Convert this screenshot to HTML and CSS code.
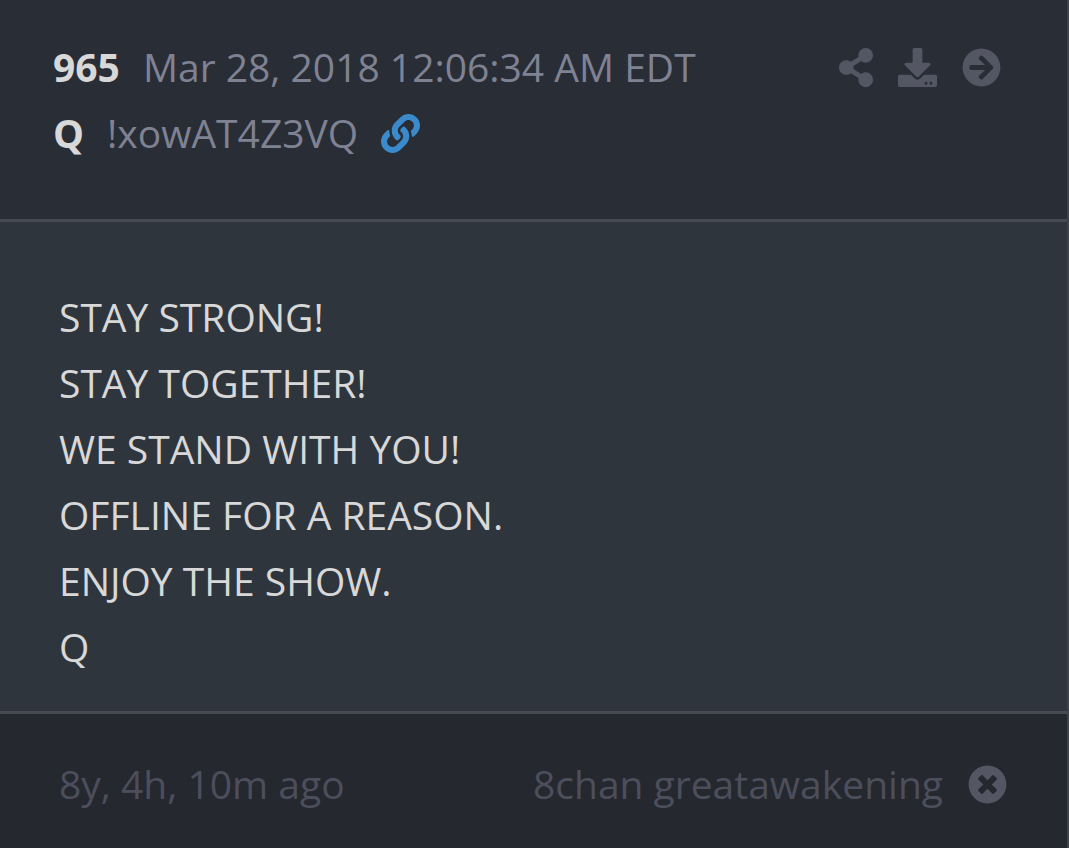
FILE: index.html
```html
<!DOCTYPE html>
<html lang="en">
<head>
    <meta charset="UTF-8">
    <meta name="viewport" content="width=device-width, initial-scale=1.0">
    <title>965</title>
    <link rel="stylesheet" href="styles.css">
</head>
<body>
    <article class="post">
        <header class="post-header">
            <div class="post-meta">
                <div class="meta-row">
                    <strong class="post-number">965</strong>
                    <time datetime="2018-03-28T00:06:34-04:00">Mar 28, 2018 12:06:34 AM EDT</time>
                </div>
                <div class="meta-row">
                    <strong class="post-author">Q</strong>
                    <span class="tripcode">!xowAT4Z3VQ</span>
                    <a class="source-link" href="#" aria-label="Source">
                        <svg class="icon" viewBox="0 0 512 512"><path d="M326.612 185.391c59.747 59.809 58.927 155.698.36 214.59-.11.12-.24.25-.36.37l-67.2 67.2c-59.27 59.27-155.699 59.262-214.96 0-59.27-59.26-59.27-155.7 0-214.96l37.106-37.106c9.84-9.84 26.786-3.3 27.294 10.606.648 17.722 3.826 35.527 9.69 52.721 1.986 5.822.567 12.262-3.783 16.612l-13.087 13.087c-28.026 28.026-28.905 73.66-1.155 101.96 28.024 28.579 74.086 28.749 102.325.51l67.2-67.19c28.191-28.191 28.073-73.757 0-101.83-3.701-3.694-7.429-6.564-10.341-8.569a16.037 16.037 0 0 1-6.947-12.606c-.396-10.567 3.348-21.456 11.698-29.806l21.054-21.055c5.521-5.521 14.182-6.199 20.584-1.731a152.482 152.482 0 0 1 20.522 17.197zM467.547 44.449c-59.261-59.262-155.69-59.27-214.96 0l-67.2 67.2c-.12.12-.25.25-.36.37-58.566 58.892-59.387 154.781.36 214.59a152.454 152.454 0 0 0 20.521 17.196c6.402 4.468 15.064 3.789 20.584-1.731l21.054-21.055c8.35-8.35 12.094-19.239 11.698-29.806a16.037 16.037 0 0 0-6.947-12.606c-2.912-2.005-6.64-4.875-10.341-8.569-28.073-28.073-28.191-73.639 0-101.83l67.2-67.19c28.239-28.239 74.3-28.069 102.325.51 27.75 28.3 26.872 73.934-1.155 101.96l-13.087 13.087c-4.35 4.35-5.769 10.79-3.783 16.612 5.864 17.194 9.042 34.999 9.69 52.721.509 13.906 17.454 20.446 27.294 10.606l37.106-37.106c59.271-59.259 59.271-155.699.001-214.959z"/></svg>
                    </a>
                </div>
            </div>
            <div class="post-actions">
                <button class="icon-button" type="button" aria-label="Share">
                    <svg class="icon icon-share" viewBox="0 0 448 512"><path d="M352 320c-22.608 0-43.387 7.819-59.79 20.895l-102.486-64.054a96.551 96.551 0 0 0 0-41.683l102.486-64.054C308.613 184.181 329.392 192 352 192c53.019 0 96-42.981 96-96S405.019 0 352 0s-96 42.981-96 96c0 7.158.79 14.13 2.276 20.841L155.79 180.895C139.387 167.819 118.608 160 96 160c-53.019 0-96 42.981-96 96s42.981 96 96 96c22.608 0 43.387-7.819 59.79-20.895l102.486 64.054A96.301 96.301 0 0 0 256 416c0 53.019 42.981 96 96 96s96-42.981 96-96-42.981-96-96-96z"/></svg>
                </button>
                <button class="icon-button" type="button" aria-label="Download">
                    <svg class="icon" viewBox="0 0 512 512"><path d="M216 0h80c13.3 0 24 10.7 24 24v168h87.7c17.8 0 26.7 21.5 14.1 34.1L269.7 378.3c-7.5 7.5-19.8 7.5-27.3 0L90.1 226.1c-12.6-12.6-3.7-34.1 14.1-34.1H192V24c0-13.3 10.7-24 24-24zm296 376v112c0 13.3-10.7 24-24 24H24c-13.3 0-24-10.7-24-24V376c0-13.3 10.7-24 24-24h146.7l49 49c20.1 20.1 52.5 20.1 72.6 0l49-49H488c13.3 0 24 10.7 24 24zm-124 88c0-11-9-20-20-20s-20 9-20 20 9 20 20 20 20-9 20-20zm64 0c0-11-9-20-20-20s-20 9-20 20 9 20 20 20 20-9 20-20z"/></svg>
                </button>
                <a class="icon-button" href="#" aria-label="Open post">
                    <svg class="icon" viewBox="0 0 512 512"><path d="M256 8c137 0 248 111 248 248S393 504 256 504 8 393 8 256 119 8 256 8zm-28.9 143.6l75.5 72.4H120c-13.3 0-24 10.7-24 24v16c0 13.3 10.7 24 24 24h182.6l-75.5 72.4c-9.7 9.3-9.9 24.8-.4 34.3l11 10.9c9.4 9.4 24.6 9.4 33.9 0L404.3 273c9.4-9.4 9.4-24.6 0-33.9L271.6 106.3c-9.4-9.4-24.6-9.4-33.9 0l-11 10.9c-9.5 9.6-9.3 25.1.4 34.4z"/></svg>
                </a>
            </div>
        </header>

        <div class="post-body">
            <p>STAY STRONG!</p>
            <p>STAY TOGETHER!</p>
            <p>WE STAND WITH YOU!</p>
            <p>OFFLINE FOR A REASON.</p>
            <p>ENJOY THE SHOW.</p>
            <p>Q</p>
        </div>

        <footer class="post-footer">
            <span>8y, 4h, 10m ago</span>
            <div class="post-source">
                <span>8chan greatawakening</span>
                <button class="icon-button" type="button" aria-label="Close">
                    <svg class="icon" viewBox="0 0 512 512"><path d="M256 8C119 8 8 119 8 256s111 248 248 248 248-111 248-248S393 8 256 8zm121.6 313.1c4.7 4.7 4.7 12.3 0 17L338 377.6c-4.7 4.7-12.3 4.7-17 0L256 312l-65.1 65.6c-4.7 4.7-12.3 4.7-17 0L134.4 338c-4.7-4.7-4.7-12.3 0-17l65.6-65-65.6-65.1c-4.7-4.7-4.7-12.3 0-17l39.6-39.6c4.7-4.7 12.3-4.7 17 0l65 65.7 65.1-65.6c4.7-4.7 12.3-4.7 17 0l39.6 39.6c4.7 4.7 4.7 12.3 0 17L312 256l65.6 65.1z"/></svg>
                </button>
            </div>
        </footer>
    </article>
</body>
</html>
```

FILE: styles.css
```css
body {
    margin: 0;
    background-color: #25282f;
    font-family: "Open Sans", "Noto Sans", sans-serif;
    font-size: 39px;
    line-height: 66px;
}

.post {
    border-right: 2px solid #3f434b;
}

/* Header */
.post-header {
    display: flex;
    justify-content: space-between;
    align-items: flex-start;
    padding: 34px 66px 53px 53px;
    background-color: #292d35;
    border-bottom: 3px solid #464a52;
    color: #7f8293;
}

.meta-row {
    display: flex;
    align-items: center;
    gap: 23px;
}

.post-number, .post-author {
    color: #d8d8d8;
    font-weight: 700;
}

.source-link {
    display: flex;
    color: #3b8acb;
}

.post-actions {
    display: flex;
    align-items: center;
    gap: 25px;
    height: 66px;
}

/* Icons */
.icon {
    display: block;
    width: 39px;
    height: 39px;
    fill: currentColor;
}

.icon-share {
    width: 34px;
}

.icon-button {
    display: block;
    padding: 0;
    background: none;
    border: none;
    color: #555664;
    cursor: pointer;
}

/* Message */
.post-body {
    padding: 62px 59px 31px;
    background-color: #2f353d;
    border-bottom: 3px solid #464a52;
    color: #d8d8d8;
}

.post-body p {
    margin: 0;
}

/* Footer */
.post-footer {
    display: flex;
    justify-content: space-between;
    padding: 37px 60px 31px 59px;
    background-color: #25282f;
    color: #4d4e5c;
}

.post-source {
    display: flex;
    align-items: center;
    gap: 25px;
}
```
